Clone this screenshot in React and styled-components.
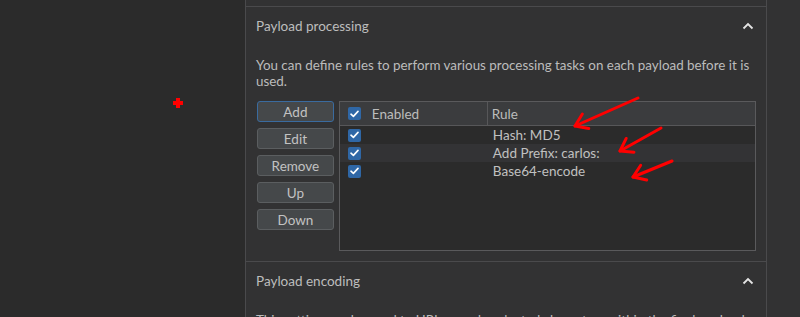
import React from 'react';
import styled, { createGlobalStyle } from 'styled-components';

const GlobalStyle = createGlobalStyle`
    html, body {
        margin: 0;
        padding: 0;
        background-color: #2b2b2b;
        font-family: Lato, "Noto Sans", sans-serif;
        font-size: 13px;
        color: #bcbcbc;
        overflow: hidden;
    }
`;

const Page = styled('div')`
    position: relative;
    display: flex;
    height: 317px;
    width: 800px;
    overflow: hidden;
`;

const LeftPane = styled('div')`
    position: relative;
    width: 245px;
    flex-shrink: 0;
    background-color: #2b2b2b;
`;

const Main = styled('div')`
    display: flex;
    flex: 1;
    background-color: #323233;
`;

const Panel = styled('div')`
    width: 520px;
    border-left: 1px solid #4a4a4c;
    border-right: 1px solid #4a4a4c;
    display: flex;
    flex-direction: column;
`;

const TopStub = styled('div')`
    height: 6px;
    border-bottom: 1px solid #4a4a4c;
    flex-shrink: 0;
`;

const Section = styled('div')`
    padding: 0 10px 10px 10px;
    border-bottom: ${p => (p.$last ? 'none' : '1px solid #4a4a4c')};
    flex-shrink: 0;
`;

const SectionHeader = styled('div')`
    display: flex;
    justify-content: space-between;
    align-items: center;
    height: 38px;
    padding-right: 2px;
`;

const SectionTitle = styled('span')`
    font-size: 13.5px;
    color: #bdbdbd;
`;

const Description = styled('p')`
    margin: 12px -4px 0 0;
    line-height: 16px;
    font-size: 13.4px;
    color: #bcbcbc;
`;

const Body = styled('div')`
    display: flex;
    gap: 5px;
    margin-top: 12px;
    padding-left: 1px;
`;

const Buttons = styled('div')`
    display: flex;
    flex-direction: column;
    gap: 6px;
    width: 77px;
`;

const Button = styled('button')`
    height: 21px;
    box-sizing: border-box;
    background-color: #45484a;
    border: 1px solid ${p => (p.$focus ? '#3a6b9f' : '#5b5e60')};
    border-radius: 3px;
    color: #c2c2c2;
    font-family: inherit;
    font-size: 13.5px;
    padding: 0;
    line-height: 18px;
    outline: unset;
    cursor: pointer;
`;

const Table = styled('div')`
    width: 418px;
    height: 150px;
    box-sizing: border-box;
    border: 1px solid #5a5a5c;
    background-color: #2b2b2b;
`;

const HeaderRow = styled('div')`
    display: grid;
    grid-template-columns: 148px 1fr;
    height: 23px;
    background-color: #3b3c3e;
    border-bottom: 1px solid #575759;
`;

const HeaderCell = styled('div')`
    display: flex;
    align-items: center;
    gap: 11px;
    padding-left: ${p => (p.$first ? '8px' : '4px')};
    border-right: ${p => (p.$first ? '1px solid #575759' : 'none')};
    font-size: 13.5px;
    color: #bcbcbc;
`;

const Row = styled('div')`
    display: grid;
    grid-template-columns: 149px 1fr;
    height: 18px;
    background-color: ${p => (p.$alt ? '#333335' : '#2b2b2b')};
`;

const Cell = styled('div')`
    display: flex;
    align-items: center;
    padding-left: ${p => (p.$first ? '8px' : '4px')};
    font-size: 13.5px;
    color: #c0c0c0;
`;

const Box = styled('span')`
    width: 13px;
    height: 13px;
    border-radius: 2px;
    background-color: #2f67a6;
    display: inline-flex;
    align-items: center;
    justify-content: center;
`;

const RightStrip = styled('div')`
    flex: 1;
    background-color: #323233;
`;

const Cross = styled('div')`
    position: absolute;
    left: 173px;
    top: 98px;
    width: 10px;
    height: 10px;
    &::before, &::after {
        content: '';
        position: absolute;
        background: #ff0000;
    }
    &::before { left: 3px; top: 0; width: 4px; height: 10px; }
    &::after { left: 0; top: 3px; width: 10px; height: 4px; }
`;

const Overlay = styled('svg')`
    position: absolute;
    left: 0;
    top: 0;
    pointer-events: none;
`;

const Check = () => (
    <Box>
        <svg width="9" height="8" viewBox="0 0 9 8">
            <polyline points="1,4.2 3.4,6.4 8,1.4" fill="none" stroke="#ffffff" strokeWidth="1.6" strokeLinecap="round" strokeLinejoin="round" />
        </svg>
    </Box>
);

const Chevron = () => (
    <svg width="12" height="8" viewBox="0 0 12 8">
        <polyline points="1.5,6.5 6,2 10.5,6.5" fill="none" stroke="#e4e4e4" strokeWidth="1.8" />
    </svg>
);

const Arrow = ({ x1, y1, x2, y2 }) => {
    const a = Math.atan2(y1 - y2, x1 - x2);
    const len = 14;
    const spread = 0.6;
    const w1 = [x2 + len * Math.cos(a - spread), y2 + len * Math.sin(a - spread)];
    const w2 = [x2 + len * Math.cos(a + spread), y2 + len * Math.sin(a + spread)];
    return (
        <g stroke="#ff0000" strokeWidth="3" strokeLinecap="round" fill="none">
            <line x1={x1} y1={y1} x2={x2} y2={y2} />
            <polyline points={`${w1[0]},${w1[1]} ${x2},${y2} ${w2[0]},${w2[1]}`} strokeLinejoin="round" />
        </g>
    );
};

const rules = ['Hash: MD5', 'Add Prefix: carlos:', 'Base64-encode'];

const App = () => {
    return (
        <>
            <GlobalStyle />
            <Page>
                <LeftPane>
                    <Cross />
                </LeftPane>
                <Main>
                    <Panel>
                        <TopStub />
                        <Section>
                            <SectionHeader>
                                <SectionTitle>Payload processing</SectionTitle>
                                <Chevron />
                            </SectionHeader>
                            <Description>
                                You can define rules to perform various processing tasks on each payload before it is used.
                            </Description>
                            <Body>
                                <Buttons>
                                    <Button $focus>Add</Button>
                                    <Button>Edit</Button>
                                    <Button>Remove</Button>
                                    <Button>Up</Button>
                                    <Button>Down</Button>
                                </Buttons>
                                <Table>
                                    <HeaderRow>
                                        <HeaderCell $first><Check />Enabled</HeaderCell>
                                        <HeaderCell>Rule</HeaderCell>
                                    </HeaderRow>
                                    {rules.map((r, i) => (
                                        <Row key={r} $alt={i === 1}>
                                            <Cell $first><Check /></Cell>
                                            <Cell>{r}</Cell>
                                        </Row>
                                    ))}
                                </Table>
                            </Body>
                        </Section>
                        <Section $last>
                            <SectionHeader>
                                <SectionTitle>Payload encoding</SectionTitle>
                                <Chevron />
                            </SectionHeader>
                            <Description>
                                This setting can be used to URL-encode selected characters within the final payload, for use in HTTP requests.
                            </Description>
                        </Section>
                    </Panel>
                    <RightStrip />
                </Main>
                <Overlay width="800" height="317">
                    <Arrow x1={638} y1={98} x2={575} y2={126} />
                    <Arrow x1={661} y1={128} x2={620} y2={151} />
                    <Arrow x1={672} y1={161} x2={633} y2={177} />
                </Overlay>
            </Page>
        </>
    );
};

export default App;
